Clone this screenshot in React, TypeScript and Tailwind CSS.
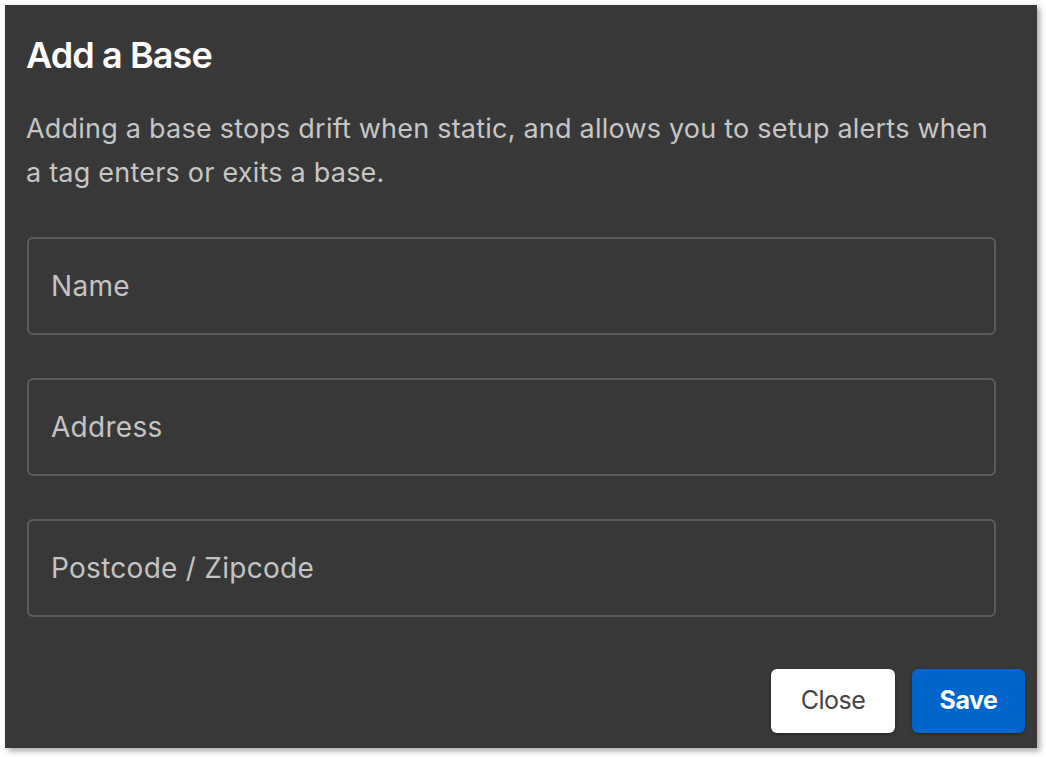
import React from 'react';

const font = { fontFamily: 'Inter, "Noto Sans", sans-serif' };

function Field({ placeholder }: { placeholder: string }) {
  return (
    <input
      placeholder={placeholder}
      className="h-[98px] w-full rounded-[6px] border-2 border-[#5c5c5c] bg-transparent px-[22px] text-[28px] tracking-[0.01em] text-[#c4c4c4] outline-none placeholder:text-[#c4c4c4]"
      style={font}
    />
  );
}

export default function App() {
  return (
    <div className="min-h-screen bg-white p-[5px]" style={font}>
      <div className="flex h-[743px] w-[1032px] flex-col bg-[#383838] shadow-[3px_3px_6px_rgba(0,0,0,0.35)]">
        <div className="pl-[21px] pr-[36px] pt-[28px]">
          <h1 className="text-[36px] font-semibold leading-[44px] tracking-[-0.025em] text-white">Add a Base</h1>
          <p className="mt-[30px] text-[27px] leading-[44px] tracking-[0.008em] text-[#c6c6c6]">
            Adding a base stops drift when static, and allows you to setup alerts when a tag enters or exits a base.
          </p>
          <div className="mr-[5px] mt-[42px] flex flex-col gap-[43px] pl-[1px]">
            <Field placeholder="Name" />
            <Field placeholder="Address" />
            <Field placeholder="Postcode / Zipcode" />
          </div>
        </div>
        <div className="mt-auto flex justify-end gap-[17px] pb-[15px] pr-[12px]">
          <button className="h-[64px] w-[124px] rounded-[6px] bg-white text-[25px] tracking-[-0.02em] text-[#444] shadow-[0_1px_3px_rgba(0,0,0,0.4)]">
            Close
          </button>
          <button className="h-[64px] w-[113px] rounded-[6px] bg-[#0066cc] text-[25px] font-bold tracking-[-0.02em] text-white shadow-[0_1px_3px_rgba(0,0,0,0.4)]">
            Save
          </button>
        </div>
      </div>
    </div>
  );
}
